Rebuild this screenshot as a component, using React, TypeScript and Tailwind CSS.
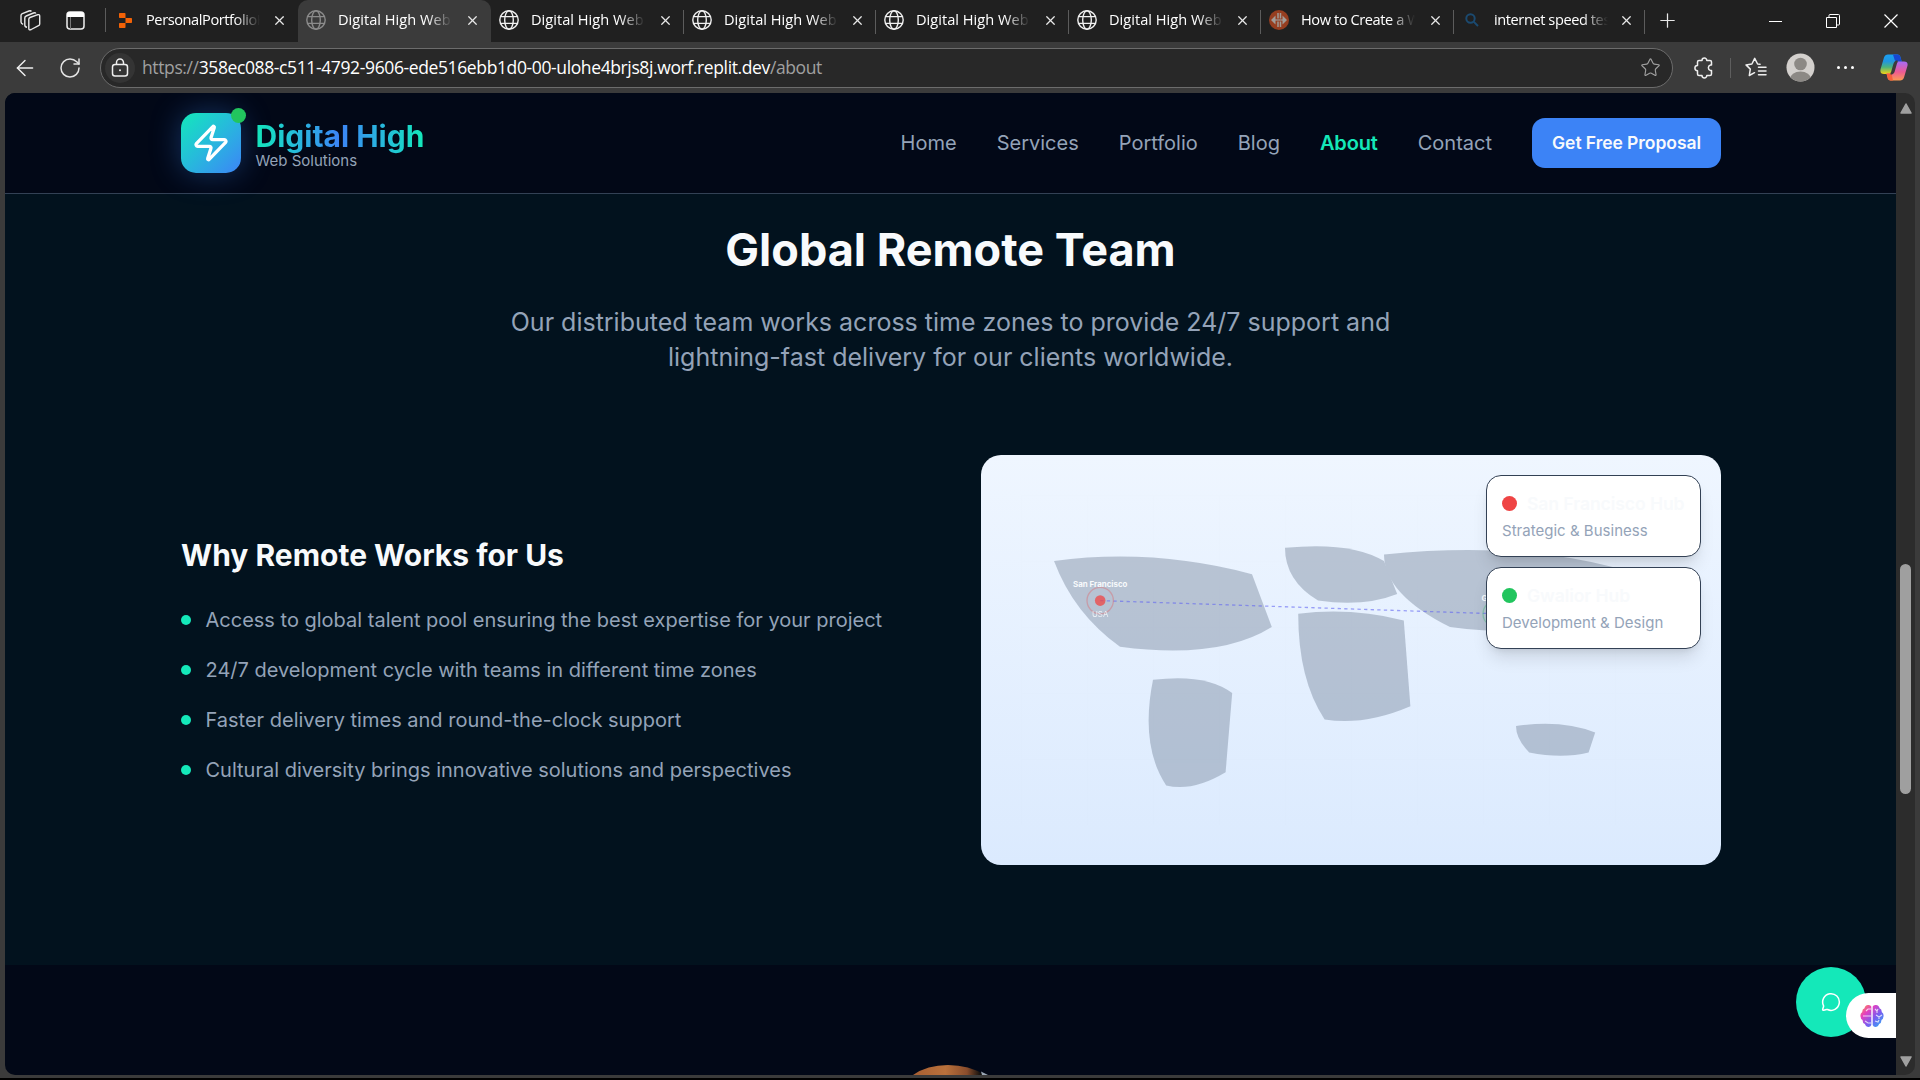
import React from "react";
import { X, Plus, Zap, Star, ArrowLeft, RotateCw, MessageCircle } from "lucide-react";

function Globe({ color }: { color: string }) {
  return (
    <svg width="20" height="20" viewBox="0 0 20 20" fill="none" stroke={color} strokeWidth="1.4">
      <circle cx="10" cy="10" r="9.2" />
      <ellipse cx="10" cy="10" rx="4.3" ry="9.2" />
      <path d="M1.6 6.6h16.8M1.6 13.4h16.8" />
    </svg>
  );
}

function Replit() {
  return (
    <svg className="ml-[2px]" width="13" height="15" viewBox="0 0 14 16" fill="#f26207">
      <path d="M0.8 0h5.4a.8.8 0 0 1 .8.8V5.3H.8A.8.8 0 0 1 0 4.5V.8A.8.8 0 0 1 .8 0zM7 5.3h6.200a.8.8 0 0 1 .8.8v3.8a.8.8 0 0 1-.8.8H7zM.8 10.7H7v4.5a.8.8 0 0 1-.8.8H.8a.8.8 0 0 1-.8-.8v-3.7a.8.8 0 0 1 .8-.8z" />
    </svg>
  );
}

function Orange() {
  return (
    <svg width="20" height="20" viewBox="0 0 20 20">
      <circle cx="10" cy="10" r="10" fill="#963e20" />
      <path d="M6.500 5.500v9L2 10zM13.500 5.500v9L18 10z" fill="#a09c99" />
      <path d="M9 3v5.500M9 11.500V17M11.500 3v5.500M11.500 11.500V17" stroke="#a09c99" strokeWidth="1.500" />
      <path d="M6 10h8" stroke="#a09c99" strokeWidth="1.200" />
    </svg>
  );
}

function Search() {
  return (
    <svg width="14" height="14" viewBox="0 0 14 14" fill="none" stroke="#1b4a70" strokeWidth="2">
      <circle cx="5.5" cy="5.5" r="4.2" />
      <path d="M8.6 8.6 13 13" />
    </svg>
  );
}

function Tab({
  icon,
  title,
  width,
  tracking = "tracking-[-0.42px]",
  active,
  line,
}: {
  icon: React.ReactNode;
  title: string;
  width: string;
  tracking?: string;
  active?: boolean;
  line?: boolean;
}) {
  return (
    <div
      className={`relative flex h-full shrink-0 items-center pb-[2px] pl-2 ${width} ${
        active ? "rounded-t-[10px] bg-[#3b3b3b]" : ""
      }`}
    >
      <div className="flex w-5 shrink-0 justify-center">{icon}</div>
      <div
        className={`ml-3 w-[114px] overflow-hidden whitespace-nowrap text-[14.6px] text-white [mask-image:linear-gradient(to_right,black_78%,transparent)] ${tracking}`}
      >
        {title}
      </div>
      <X className="absolute right-[11px] top-[13px] text-[#e8e8e8]" size={15} strokeWidth={2} />
      {line && <div className="absolute right-0 top-[10px] h-6 w-px bg-[#5c5c5c]" />}
    </div>
  );
}

function TabBar() {
  const globe = <Globe color="#f0f0f0" />;
  const site = "Digital High Web Solutions";
  return (
    <div className="flex h-[42px] bg-[#202020]">
      <div className="flex w-[106px] shrink-0 items-center pb-[2px] pl-5">
        <svg width="21" height="21" viewBox="0 0 21 21" fill="none" stroke="#e8e8e8" strokeWidth="1.4" strokeLinejoin="round">
          <path d="M8.800 9.200Q8.800 8 10 7.500L17.800 4.700Q19.700 4.200 19.700 6v8q0 1.200-1.200 1.700L11.200 19.500Q8.800 20.500 8.800 18.500z" />
          <path d="M7 17.300Q4.800 17 4.800 15V8Q4.800 6.500 6.200 6L13.500 3q1.800-.6 2.300.6" />
          <path d="M3.200 14.300Q1 13.600 1 12V5.600Q1 4.300 2.300 3.700L9 1q1.700-.6 2.400.5" />
        </svg>
        <svg className="ml-[25px]" width="19" height="19" viewBox="0 0 19 19" fill="none">
          <rect x="1" y="1" width="17" height="17" rx="3" stroke="#eee" strokeWidth="1.5" />
          <path d="M1 6V4q0-3 3-3h11q3 0 3 3v2z" fill="#fff" />
          <path d="M4.500 6v12" stroke="#777" />
        </svg>
        <div className="ml-[20px] h-6 w-px bg-[#5c5c5c]" />
      </div>
      <Tab icon={<Replit />} title="PersonalPortfolioHub" width="w-[192px]" />
      <Tab icon={<Globe color="#8b8b8b" />} title={site} width="w-[193px]" tracking="tracking-[0.02px]" active />
      <Tab icon={globe} title={site} width="w-[193px]" tracking="tracking-[0.02px]" line />
      <Tab icon={globe} title={site} width="w-[192px]" tracking="tracking-[0.02px]" line />
      <Tab icon={globe} title={site} width="w-[193px]" tracking="tracking-[0.02px]" line />
      <Tab icon={globe} title={site} width="w-[192px]" tracking="tracking-[0.02px]" line />
      <Tab icon={<Orange />} title="How to Create a Website" width="w-[193px]" line />
      <Tab icon={<Search />} title="internet speed test" width="w-[191px]" line />
      <Plus className="ml-[11px] mt-[9px] text-[#e8e8e8]" size={23} strokeWidth={1.300} />
      <div className="ml-auto flex items-center gap-[44px] pr-[22px]">
        <div className="h-px w-[13px] bg-white" />
        <svg width="14" height="14" viewBox="0 0 14 14" fill="none" stroke="#fff">
          <path d="M.5 3.500h10v10H.5zM3 3V1.500q0-1 1-1h8.500q1 0 1 1V10q0 1-1 1H11" />
        </svg>
        <svg width="14" height="14" viewBox="0 0 14 14" stroke="#fff" strokeWidth="1.200">
          <path d="m.5.5 13 13M13.500.5l-13 13" />
        </svg>
      </div>
    </div>
  );
}

function Toolbar() {
  return (
    <div className="flex h-[51px] items-center bg-[#3b3b3b]">
      <ArrowLeft className="ml-[12px]" size={26} strokeWidth={1.300} color="#f0f0f0" />
      <RotateCw className="ml-[20px]" size={24} strokeWidth={1.500} color="#e4e4e4" />
      <div className="ml-[18px] flex h-10 w-[1573px] shrink-0 items-center rounded-full border border-[#6c6c6c] bg-[#282828] pl-[4px] pr-[11px]">
        <div className="flex size-[30px] items-center justify-center rounded-full bg-[#343434]">
          <svg width="18" height="20" viewBox="0 0 18 20" fill="none" stroke="#eee" strokeWidth="1.500">
            <rect x="1.500" y="6.500" width="15" height="11.500" rx="2.500" />
            <path d="M5.500 6.500V4.500a3.500 3.500 0 0 1 7 0v2" />
            <circle cx="9" cy="12.300" r="1" fill="#eee" stroke="none" />
          </svg>
        </div>
        <div className="ml-[7px] whitespace-nowrap text-[17.500px] tracking-[-0.380px] text-[#a0a0a0]">
          https://<span className="text-white">358ec088-c511-4792-9606-ede516ebb1d0-00-ulohe4brjs8j.worf.replit.dev</span>/about
        </div>
        <Star className="ml-auto" size={21} strokeWidth={1.300} color="#a0a0a0" />
      </div>
      <svg className="ml-[21px] shrink-0" width="22" height="22" viewBox="0 0 22 22" fill="none" stroke="#eee" strokeWidth="1.500" strokeLinejoin="round">
        <path d="M5 3.500h3a2.400 2.400 0 0 1 4.800 0H16q1.500 0 1.500 1.500v3h-1a2.900 2.900 0 0 0 0 5.600h1V17q0 1.500-1.500 1.500h-3.200a2.400 2.400 0 0 1-4.800 0H5Q3.500 18.500 3.500 17v-3.300a2.600 2.600 0 0 1 0-5.200V5Q3.500 3.500 5 3.500z" />
      </svg>
      <div className="ml-[14px] h-5 w-px bg-[#5e5e5e]" />
      <svg className="ml-[14px]" width="22" height="21" viewBox="0 0 22 21" fill="none" stroke="#eee" strokeWidth="1.500" strokeLinejoin="round" strokeLinecap="round">
        <path d="M15 7.300 12.600 7 9.700 1.300 6.900 7 1 7.900l4.300 4.200-1 6.400 5.200-2.800" />
        <path d="M13.500 10.200H21M13.500 14H21M13.500 17.800H21" />
      </svg>
      <svg className="ml-[19px]" width="29" height="29" viewBox="0 0 29 29">
        <clipPath id="avatar"><circle cx="14.500" cy="14.500" r="14" /></clipPath>
        <circle cx="14.500" cy="14.500" r="14" fill="#d3d0cd" />
        <g fill="#8c8985" clipPath="url(#avatar)">
          <circle cx="14.500" cy="11" r="6.300" />
          <ellipse cx="14.500" cy="26" rx="10.500" ry="7.500" />
        </g>
      </svg>
      <div className="ml-[22px] flex gap-[4px]">
        <div className="size-[3px] rounded-full bg-white" />
        <div className="size-[3px] rounded-full bg-white" />
        <div className="size-[3px] rounded-full bg-white" />
      </div>
      <Copilot />
    </div>
  );
}

function Copilot() {
  return (
    <svg className="ml-[26px] shrink-0" width="28" height="27" viewBox="0 0 28 27">
      <defs>
        <linearGradient id="cpa" x1="0" y1="0" x2="0" y2="1">
          <stop offset="0" stopColor="#1aa0f2" />
          <stop offset=".35" stopColor="#2196e0" />
          <stop offset=".65" stopColor="#4cb47c" />
          <stop offset="1" stopColor="#f4d414" />
        </linearGradient>
        <linearGradient id="cpb" x1="0" y1="0" x2="0" y2="1">
          <stop offset="0" stopColor="#a66bf6" />
          <stop offset=".55" stopColor="#ed5a93" />
          <stop offset="1" stopColor="#fb9a52" />
        </linearGradient>
      </defs>
      <path d="M8 .5h9.500q2 0 2.700 2l1.500 5h-4q-2.600 0-3.300 2.600L12 20H4Q-.5 20 .6 15L4 3.500Q5 .5 8 .5z" fill="url(#cpa)" />
      <path d="M13 .5h4.500q2 0 2.700 2l1.500 5h-4q-2 0-3-1.500z" fill="#1746d1" />
      <path d="M20 26.500h-9.500q-2 0-2.700-2L6.500 19.500h4q2.600 0 3.300-2.600L16.500 7.500H24q4.500 0 3.400 4.500L24 23.500q-1 3-4 3z" fill="url(#cpb)" />
      <path d="M13 26.500h-2.500q-2 0-2.700-2L6.500 19.500h5z" fill="#f5603c" />
      <path d="M14.400 10.100Q15.100 7.500 17.700 7.500h-1.200L13.800 16.900Q13.100 19.500 10.500 19.500h1.200z" fill="#3b3b3b" stroke="#3b3b3b" strokeWidth="2" />
    </svg>
  );
}

function Header() {
  return (
    <header className="flex h-[101px] shrink-0 items-center border-b border-[#334155] bg-[#020817] pl-[176px] pr-[175px]">
      <div className="relative flex size-[60px] items-center justify-center rounded-[15px] bg-linear-to-br from-[#14e8b9] to-[#3c83f6] shadow-[0_0_30px_rgba(60,131,246,0.35)]">
        <Zap size={40} strokeWidth={2} color="#fff" />
        <div className="absolute -right-[5px] -top-[5px] size-[15px] rounded-full bg-[#22c55e]" />
      </div>
      <div className="ml-[14.500px] flex flex-col pt-[2px]">
        <div className="bg-linear-to-r from-[#14e8b9] via-[#3c83f6] to-[#14e8b9] bg-clip-text pb-[5px] text-[30px] font-bold leading-[32px] text-transparent">
          Digital High
        </div>
        <div className="-mt-[5px] text-[15px] leading-[17px] text-[#94a3b8]">Web Solutions</div>
      </div>
      <nav className="ml-auto flex items-center gap-10 text-[20px] font-normal text-[#94a3b8]">
        <span>Home</span>
        <span>Services</span>
        <span>Portfolio</span>
        <span>Blog</span>
        <span className="font-semibold tracking-[-0.15px] text-[#14e8b9]">About</span>
        <span>Contact</span>
        <span className="flex h-[50px] w-[189px] items-center justify-center rounded-[13px] bg-[#3c83f6] pt-px text-[17.500px] font-semibold tracking-[-0.06px] text-[#f8fafc]">
          Get Free Proposal
        </span>
      </nav>
    </header>
  );
}

function WorldMap() {
  return (
    <svg className="h-[330px] w-[660px]" viewBox="0 0 1000 500">
      <defs>
        <pattern id="grid" width="100" height="100" patternUnits="userSpaceOnUse">
          <path d="M100 0H0V100" fill="none" stroke="#94a3b8" strokeWidth="1" />
        </pattern>
      </defs>
      <rect width="1000" height="500" fill="url(#grid)" opacity="0.03" />
      <g fill="#64748b" opacity="0.37">
        <path d="M50 100Q200 80 350 120L380 200Q300 250 150 230Q80 180 50 100Z" />
        <path d="M200 280Q280 270 320 300L310 420Q260 450 220 440Q180 380 200 280Z" />
        <path d="M400 80Q500 70 550 100L570 150Q520 170 450 160Q400 130 400 80Z" />
        <path d="M420 180Q500 170 580 190L590 320Q520 350 460 340Q420 280 420 180Z" />
        <path d="M550 90Q750 70 900 110L920 180Q800 220 650 200Q550 150 550 90Z" />
        <path d="M750 350Q820 340 870 360L860 390Q820 400 770 390Q750 370 750 350Z" />
      </g>
      <path d="M120 160L720 180" stroke="#6366f1" strokeOpacity="0.6" strokeWidth="2" strokeDasharray="5 5" />
      <g fill="none" strokeWidth="2" opacity="0.3">
        <circle cx="120" cy="160" r="20" stroke="#ef4444" />
        <circle cx="720" cy="180" r="20" stroke="#22c55e" />
      </g>
      <circle cx="120" cy="160" r="8" fill="#ef4444" opacity="0.75" />
      <circle cx="720" cy="180" r="8" fill="#22c55e" opacity="0.75" />
      <g textAnchor="middle" fill="#f8fafc">
        <text x="120" y="139" fontSize="12" fontWeight="700">San Francisco</text>
        <text x="120" y="184.500" fontSize="12" opacity="0.85">USA</text>
        <text x="720" y="160" fontSize="12" fontWeight="700">Gwalior</text>
        <text x="720" y="205" fontSize="12" opacity="0.85">India</text>
      </g>
    </svg>
  );
}

function HubCard({ dot, name, role }: { dot: string; name: string; role: string }) {
  return (
    <div className="flex h-[82px] w-[215px] flex-col justify-center rounded-[15px] border border-[#334155] bg-white px-[15px] shadow-[0_12px_18px_-4px_rgba(0,0,0,0.12),0_5px_8px_-5px_rgba(0,0,0,0.12)]">
      <div className="flex items-center gap-[10px] whitespace-nowrap text-[17.500px] font-semibold leading-[25px] tracking-[-0.05px] text-[#f8fafc]">
        <span className={`size-[15px] shrink-0 rounded-full ${dot}`} />
        {name}
      </div>
      <div className="mt-[5px] text-[15px] leading-5 tracking-[0.02px] text-[#94a3b8]">{role}</div>
    </div>
  );
}

const reasons = [
  "Access to global talent pool ensuring the best expertise for your project",
  "24/7 development cycle with teams in different time zones",
  "Faster delivery times and round-the-clock support",
  "Cultural diversity brings innovative solutions and perspectives",
];

function TeamSection() {
  return (
    <section className="h-[771px] shrink-0 bg-[#02121e] pl-[175px] pr-[175px] pt-[31px]">
      <h2 className="text-center text-[45px] font-bold leading-[50px] text-[#f8fafc]">Global Remote Team</h2>
      <p className="mx-auto mt-[30px] w-[960px] text-center text-[25px] leading-[35px] text-[#94a3b8]">
        Our distributed team works across time zones to provide 24/7 support and
        <br />
        lightning-fast delivery for our clients worldwide.
      </p>
      <div className="ml-px mt-[80px] grid grid-cols-2 items-center gap-[60px]">
        <div>
          <h3 className="text-[30px] font-bold leading-[40px] text-[#f8fafc]">Why Remote Works for Us</h3>
          <ul className="mt-[30px] flex flex-col gap-5">
            {reasons.map((r) => (
              <li key={r} className="flex items-center gap-[14.500px] whitespace-nowrap text-[20px] leading-[30px] text-[#94a3b8]">
                <span className="size-[10px] shrink-0 rounded-full bg-[#14e8b9]" />
                {r}
              </li>
            ))}
          </ul>
        </div>
        <div className="relative flex h-[410px] items-center justify-center rounded-[20px] bg-linear-to-b from-[#eff6ff] to-[#dbeafe]">
          <WorldMap />
          <div className="absolute right-5 top-5 flex flex-col gap-[10px]">
            <HubCard dot="bg-[#ef4444]" name="San Francisco Hub" role="Strategic & Business" />
            <HubCard dot="bg-[#22c55e]" name="Gwalior Hub" role="Development & Design" />
          </div>
        </div>
      </div>
    </section>
  );
}

function Brain() {
  return (
    <svg width="24" height="24" viewBox="0 0 24 24">
      <defs>
        <linearGradient id="brain" x1="0" y1="0" x2="1" y2="1">
          <stop offset="0" stopColor="#ff9a3d" />
          <stop offset=".3" stopColor="#e540c0" />
          <stop offset=".6" stopColor="#7a5cf0" />
          <stop offset="1" stopColor="#27b4f5" />
        </linearGradient>
      </defs>
      <path d="M11.300 2.500Q10.500.6 8 1 5 1.300 4.500 4.200 2 5 2.300 8 0 9.500.5 12.300.6 15 2.600 16q-.2 3 2.300 4 1 3 4 2.900 2-.1 2.400-1.900zM12.700 2.500Q13.500.6 16 1q3 .3 3.500 3.200Q22 5 21.700 8 24 9.500 23.500 12.300 23.400 15 21.400 16q.2 3-2.300 4-1 3-4 2.900-2-.1-2.400-1.900z" fill="url(#brain)" />
      <path d="M11 5H8L6 7M3 12h8M5 17l3 2h3M15 5l2 2 1-2M17 7v2M16 11l3 2 3-2M19 13v2M15 17l3 1 1-2" fill="none" stroke="#fff" strokeOpacity=".75" strokeWidth="1.100" />
    </svg>
  );
}

function Page() {
  return (
    <div className="relative flex w-[1891px] flex-col overflow-hidden bg-[#020817] font-[Inter,sans-serif]">
      <Header />
      <TeamSection />
      <svg className="mx-auto mt-auto shrink-0" width="76" height="10" viewBox="0 0 76 10">
        <defs>
          <linearGradient id="hair" x1="0" x2="1">
            <stop offset="0" stopColor="#a85f32" />
            <stop offset=".45" stopColor="#b9713c" />
            <stop offset=".75" stopColor="#8a4d2c" />
            <stop offset=".93" stopColor="#15120f" />
          </linearGradient>
        </defs>
        <path d="M0 10Q14 0 35 0T72 10Z" fill="url(#hair)" />
        <path d="m68 6.500 7 3.500h-6z" fill="#9aa6b4" />
      </svg>
      <div className="absolute left-[1791px] top-[874px] flex size-[70px] items-center justify-center rounded-full bg-[#14e8b9]">
        <MessageCircle size={20} strokeWidth={1.800} color="#fff" />
      </div>
      <div className="absolute right-0 top-[900px] flex h-[45px] w-[50px] items-center rounded-l-full bg-white pl-[14px]">
        <Brain />
      </div>
    </div>
  );
}

function Scrollbar() {
  return (
    <div className="flex w-[19px] flex-col items-center justify-between bg-[#2c2c2c] pb-[8px] pt-[10px]">
      <svg width="12" height="11" viewBox="0 0 12 11">
        <path d="M6 1 11 10H1z" fill="#a0a0a0" stroke="#a0a0a0" strokeWidth="1.500" strokeLinejoin="round" />
      </svg>
      <div className="mt-[187px] h-[230px] w-[11px] rounded-full bg-[#9f9f9f]" />
      <svg width="12" height="11" viewBox="0 0 12 11">
        <path d="M6 10 11 1H1z" fill="#a0a0a0" stroke="#a0a0a0" strokeWidth="1.500" strokeLinejoin="round" />
      </svg>
    </div>
  );
}

export default function App() {
  return (
    <div className="flex h-[1080px] w-[1920px] flex-col overflow-hidden border-b-2 border-black bg-[#3b3b3b] font-['Open_Sans','Noto_Sans',sans-serif]">
      <TabBar />
      <Toolbar />
      <div className="ml-[5px] flex h-[982px] w-[1910px] overflow-hidden rounded-[10px]">
        <Page />
        <Scrollbar />
      </div>
    </div>
  );
}
